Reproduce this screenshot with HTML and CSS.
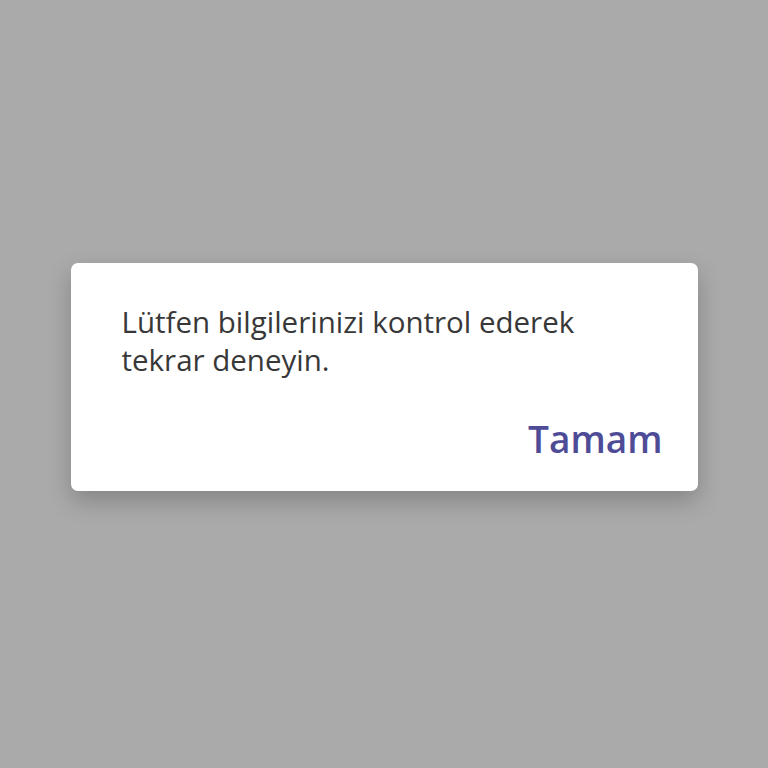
FILE: index.html
```html
<!DOCTYPE html>
<html lang="tr">
<head>
<meta charset="utf-8">
<title>Uyarı</title>
<link rel="stylesheet" href="styles.css">
</head>
<body>
<div class="overlay">
  <div class="dialog" role="alertdialog">
    <p class="message">Lütfen bilgilerinizi kontrol ederek<br>tekrar deneyin.</p>
    <div class="actions">
      <button class="btn" type="button">Tamam</button>
    </div>
  </div>
</div>
</body>
</html>
```
FILE: styles.css
```css
html, body {
  margin: 0;
  padding: 0;
  height: 100%;
}
body {
  background: #aaaaaa;
  font-family: "Open Sans", "Noto Sans", sans-serif;
}
.overlay {
  height: 768px;
  display: flex;
  justify-content: center;
  align-items: center;
  padding-bottom: 14px;
  box-sizing: border-box;
}
.dialog {
  width: 627px;
  height: 228px;
  box-sizing: border-box;
  background: #ffffff;
  border-radius: 7px;
  box-shadow: 0 10px 24px rgba(0, 0, 0, 0.22);
  padding: 40px 35px 0 51px;
  display: flex;
  flex-direction: column;
}
.message {
  margin: 0;
  font-size: 29.5px;
  line-height: 38px;
  color: #383838;
  font-weight: 400;
}
.actions {
  display: flex;
  justify-content: flex-end;
  margin-top: 40px;
}
.btn {
  border: 0;
  background: none;
  padding: 0;
  font-family: inherit;
  font-size: 37px;
  font-weight: 600;
  color: #4e4c97;
  line-height: 40px;
  cursor: pointer;
}
```
